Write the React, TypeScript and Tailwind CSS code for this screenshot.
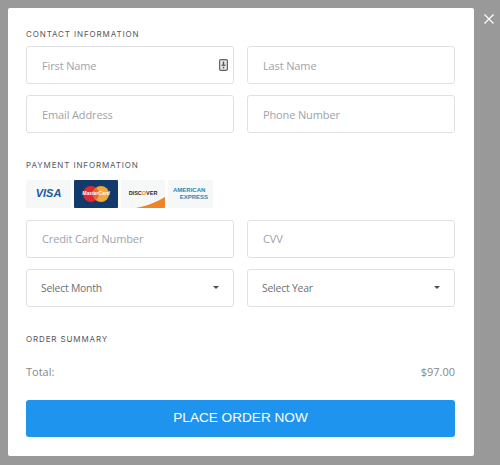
import React from "react";

const field = "h-[38px] w-[208px] rounded-[3px] border border-[#dfe1e5] bg-white flex items-center text-[11px] tracking-[-0.012em] text-[#9ea3ab]";
const sectionLabel = "text-[8px] tracking-[0.11em] text-[#55585c] leading-[8.5px]";
const body = { fontFamily: "'Open Sans', 'Noto Sans', sans-serif" };
const head = { fontFamily: "Inter, sans-serif" };
const arial = { fontFamily: "'Liberation Sans', sans-serif" };

function Field({ text, icon }: { text: string; icon?: boolean }) {
  return (
    <div className={`${field} pl-[15px] pr-[5px] justify-between`}>
      <span className="pt-[2px]">{text}</span>
      {icon && (
        <svg width="9" height="12" viewBox="0 0 9 12" className="mb-[1px]">
          <rect x="0.6" y="0.6" width="7.8" height="10.8" rx="1.3" fill="#e4e6e8" stroke="#5f6469" strokeWidth="1.2" />
          <rect x="3.8" y="2.6" width="1.4" height="3.2" fill="#4a4e52" />
          <rect x="2.6" y="5.6" width="3.8" height="1.2" fill="#4a4e52" />
          <rect x="3.8" y="7.8" width="1.4" height="1.5" fill="#4a4e52" />
        </svg>
      )}
    </div>
  );
}

function SelectBox({ text }: { text: string }) {
  return (
    <div className="h-[38px] w-[208px] rounded-[3px] border border-[#dfe1e5] bg-white flex items-center justify-between pl-[14px] pr-[14px] text-[#6c7075] text-[10.4px] tracking-[-0.02em]">
      <span className="pt-[2px]">{text}</span>
      <span className="w-0 h-0 border-x-[3.5px] border-x-transparent border-t-[3.5px] border-t-[#4a4e52]" />
    </div>
  );
}

function CardFrame({ children, className = "bg-[#f6f7f7] w-[44px]" }: { children: React.ReactNode; className?: string }) {
  return <div className={`h-[28px] rounded-[1px] relative overflow-hidden flex items-center justify-center ${className}`}>{children}</div>;
}

export default function App() {
  return (
    <div className="relative w-[500px] h-[465px] bg-[#999999] pt-2 pl-2 overflow-hidden" style={body}>
      <button className="absolute left-[484px] top-[14px] text-white" aria-label="Close">
        <svg width="10" height="10" viewBox="0 0 10 10" className="block">
          <path d="M0.5 0.5L9.5 9.5M9.5 0.5L0.5 9.5" stroke="#fff" strokeWidth="1.2" />
        </svg>
      </button>
      <div className="w-[466px] h-[448px] bg-white rounded-[2px] pl-[18px] pr-[19px] pt-[22px]">
        <div className={sectionLabel} style={head}>CONTACT INFORMATION</div>
        <div className="mt-[7.5px] grid grid-cols-[208px_208px] gap-x-[13px] gap-y-[11px]">
          <Field text="First Name" icon />
          <Field text="Last Name" />
          <Field text="Email Address" />
          <Field text="Phone Number" />
        </div>
        <div className={`mt-[28px] ${sectionLabel}`} style={head}>PAYMENT INFORMATION</div>
        <div className="mt-[10px] flex gap-[3px]">
          <CardFrame className="bg-[#f6f7f7] w-[45px]">
            <span className="text-[11px] font-bold italic text-[#1a5a99]" style={arial}>VISA</span>
          </CardFrame>
          <CardFrame className="bg-[#123a6b] w-[44px]">
            <svg width="28" height="18" viewBox="0 0 28 18">
              <circle cx="9" cy="9" r="8" fill="#dd2a30" />
              <circle cx="19" cy="9" r="8" fill="#f2a93b" />
              <path d="M14 2.8a8 8 0 0 1 0 12.4a8 8 0 0 1 0-12.4z" fill="#e8692c" />
            </svg>
            <span className="absolute text-[5px] font-bold italic text-white" style={arial}>MasterCard</span>
          </CardFrame>
          <CardFrame>
            <span className="text-[5.5px] font-bold text-[#2b2b2b] mb-[1px]" style={arial}>DISC<span className="text-[#e98a2c]">O</span>VER</span>
            <svg width="44" height="28" viewBox="0 0 44 28" className="absolute inset-0">
              <path d="M15 28C27 26 37 21 44 17V28H15z" fill="#ee8427" />
            </svg>
          </CardFrame>
          <CardFrame className="bg-[#f6f7f7] w-[45px]">
            <span className="text-[6px] leading-[7px] font-bold text-[#2a86b8] w-[35px]" style={arial}>
              AMERICAN
              <span className="block text-right">EXPRESS</span>
            </span>
          </CardFrame>
        </div>
        <div className="mt-[12px] grid grid-cols-[208px_208px] gap-x-[13px] gap-y-[11px]">
          <Field text="Credit Card Number" />
          <Field text="CVV" />
          <SelectBox text="Select Month" />
          <SelectBox text="Select Year" />
        </div>
        <div className={`mt-[28px] ${sectionLabel}`} style={head}>ORDER SUMMARY</div>
        <div className="mt-[21px] flex justify-between text-[11px] text-[#85898e] leading-[16px]">
          <span>Total:</span>
          <span>$97.00</span>
        </div>
        <button className="mt-[20px] block w-[429px] h-[37px] rounded-[3px] bg-[#1e94ee] text-white text-[13.6px]" style={arial}>
          PLACE ORDER NOW
        </button>
      </div>
    </div>
  );
}
